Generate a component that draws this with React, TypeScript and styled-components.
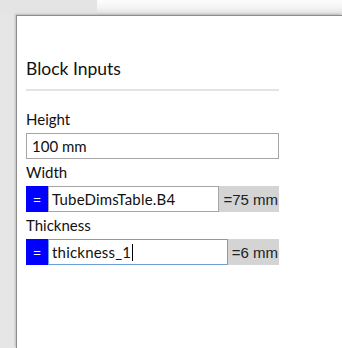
import React from "react";
import styled, { createGlobalStyle } from "styled-components";

const Global = createGlobalStyle`
  html, body { margin: 0; padding: 0; }
  body { background: #e6e6e6; font-family: Lato, "Open Sans", sans-serif; color: #222; }
`;

const Root = styled.div`
  width: 342px;
  height: 348px;
  display: flex;
  flex-direction: column;
  overflow: hidden;
  background: #e6e6e6;
`;

const TopBar = styled.div`
  height: 15px;
  display: flex;
  flex-shrink: 0;
`;

const TopLeft = styled.div`
  width: 97px;
  background: #e4e4e4;
`;

const TopRight = styled.div`
  flex: 1;
  background: linear-gradient(#fdfdfd, #f4f4f4 50%, #dedede);
`;

const Body = styled.div`
  flex: 1;
  display: flex;
`;

const Gutter = styled.div`
  width: 16px;
  background: #e6e6e6;
`;

const Panel = styled.div`
  flex: 1;
  background: #fff;
  border-top: 1px solid #8c8c8c;
  border-left: 1px solid #8c8c8c;
  box-shadow: -1px -1px 2px rgba(0, 0, 0, 0.18);
  padding: 42px 0 0 9px;
`;

const Content = styled.div`
  width: 253px;
  display: flex;
  flex-direction: column;
`;

const Title = styled.div`
  font-size: 17.5px;
  line-height: 22px;
  color: #111;
`;

const Separator = styled.div`
  height: 2px;
  background: #e2e4e6;
  margin: 9px 0 15px;
`;

const Label = styled.div`
  font-size: 15px;
  line-height: 20px;
  margin: 3px 0 4px;
  color: #111;
`;

const Row = styled.div`
  display: flex;
  height: 26px;
`;

const Eq = styled.div`
  width: 22px;
  background: #0000ff;
  color: #fff;
  font-family: "Liberation Sans", Arial, sans-serif;
  font-size: 13px;
  display: flex;
  align-items: center;
  justify-content: center;
  flex-shrink: 0;
`;

const Field = styled.div<{ $focused?: boolean }>`
  flex: 1;
  min-width: 0;
  box-sizing: border-box;
  border: 1px solid ${(p) => (p.$focused ? "#6f9fd8" : "#a6a6a6")};
  background: #fff;
  display: flex;
  align-items: center;
  padding-left: 5px;
  font-size: 15px;
  color: #111;
  white-space: nowrap;
`;

const ExprField = styled(Field)`
  padding-left: 3px;
  letter-spacing: 0.2px;
`;

const Result = styled.div`
  background: #d4d4d4;
  font-family: "Liberation Sans", Arial, sans-serif;
  font-size: 15px;
  color: #222;
  display: flex;
  align-items: center;
  padding: 0 1px 0 4px;
  flex-shrink: 0;
`;

const Caret = styled.span`
  display: inline-block;
  width: 1px;
  height: 17px;
  background: #000;
  margin-left: 1px;
`;

export default function App() {
  return (
    <Root>
      <Global />
      <TopBar>
        <TopLeft />
        <TopRight />
      </TopBar>
      <Body>
        <Gutter />
        <Panel>
          <Content>
            <Title>Block Inputs</Title>
            <Separator />
            <Label>Height</Label>
            <Row>
              <Field>100 mm</Field>
            </Row>
            <Label>Width</Label>
            <Row>
              <Eq>=</Eq>
              <ExprField>TubeDimsTable.B4</ExprField>
              <Result>=75 mm</Result>
            </Row>
            <Label>Thickness</Label>
            <Row>
              <Eq>=</Eq>
              <ExprField $focused>
                thickness_1
                <Caret />
              </ExprField>
              <Result>=6 mm</Result>
            </Row>
          </Content>
        </Panel>
      </Body>
    </Root>
  );
}
